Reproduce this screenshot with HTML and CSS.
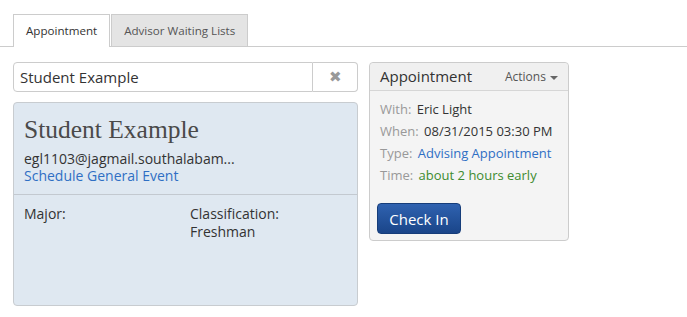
FILE: index.html
```html
<!DOCTYPE html>
<html lang="en">
<head>
  <meta charset="UTF-8" />
  <title>Appointment</title>
  <link rel="stylesheet" href="styles.css">
</head>
<body>

  <div class="tabs">
    <a href="#" class="tab active">Appointment</a>
    <a href="#" class="tab">Advisor Waiting Lists</a>
  </div>

  <div class="content">
    <div class="left-col">
      <div class="search">
        <input type="text" value="Student Example">
        <button class="btn-clear">&#10006;</button>
      </div>

      <div class="student-card">
        <div class="student-top">
          <h2>Student Example</h2>
          <div class="email">egl1103@jagmail.southalabam...</div>
          <a href="#" class="event-link">Schedule General Event</a>
        </div>
        <div class="student-info">
          <div class="info-col">Major:</div>
          <div class="info-col">Classification:<br>Freshman</div>
        </div>
      </div>
    </div>

    <div class="panel">
      <div class="panel-head">
        <span class="panel-title">Appointment</span>
        <span class="actions">Actions <span class="caret"></span></span>
      </div>
      <div class="panel-body">
        <div class="row"><span class="lbl">With:</span> Eric Light</div>
        <div class="row"><span class="lbl">When:</span> 08/31/2015 03:30 PM</div>
        <div class="row"><span class="lbl">Type:</span> <a href="#">Advising Appointment</a></div>
        <div class="row"><span class="lbl">Time:</span> <span class="early">about 2 hours early</span></div>
        <button class="btn-checkin">Check In</button>
      </div>
    </div>
  </div>

</body>
</html>
```

FILE: styles.css
```css
body {
  margin: 0;
  font-family: "Open Sans", Arial, sans-serif;
  font-size: 13px;
  color: #333;
  background: #fff;
}
a {
  color: #2f6fc4;
  text-decoration: none;
}
.tabs {
  display: flex;
  margin-top: 14px;
  padding-left: 13px;
  border-bottom: 1px solid #ccc;
}
.tab {
  height: 31px;
  line-height: 31px;
  padding: 0 12px;
  font-size: 11.6px;
  color: #555;
  background: #e4e4e4;
  border: 1px solid #ccc;
  border-bottom: none;
  margin-left: 1px;
}
.tab.active {
  background: #fff;
  color: #333;
  margin-left: 0;
  margin-bottom: -1px;
  height: 32px;
}
.content {
  display: flex;
  align-items: flex-start;
  gap: 11px;
  padding: 15px 0 0 13px;
}
.left-col {
  width: 345px;
  display: flex;
  flex-direction: column;
  gap: 10px;
}
.search {
  display: flex;
  height: 30px;
}
.search input {
  flex: 1;
  min-width: 0;
  box-sizing: border-box;
  height: 30px;
  border: 1px solid #ccc;
  border-radius: 4px 0 0 4px;
  padding: 0 6px;
  font-family: inherit;
  font-size: 15px;
  color: #333;
}
.btn-clear {
  width: 45px;
  height: 30px;
  border: 1px solid #ccc;
  border-left: none;
  border-radius: 0 4px 4px 0;
  background: #fff;
  color: #999;
  font-size: 15px;
  padding: 0;
}
.student-card {
  box-sizing: border-box;
  height: 204px;
  background: #dfe8f1;
  border: 1px solid #c8ccd0;
  border-radius: 4px;
}
.student-top {
  padding: 12px 10px 10px;
  border-bottom: 1px solid #c3c9d0;
  line-height: 17px;
  font-size: 14px;
}
.student-top h2 {
  margin: 0 0 5px;
  font-family: "Liberation Serif", "Times New Roman", serif;
  font-weight: normal;
  font-size: 25.5px;
  line-height: 30px;
  color: #4a4a4a;
}
.email {
  color: #333;
}
.event-link {
  display: block;
}
.student-info {
  display: flex;
  padding: 10px 10px;
  font-size: 14px;
  line-height: 18px;
}
.info-col {
  width: 166px;
  flex-shrink: 0;
}
.info-col + .info-col {
  flex: 1;
  width: auto;
}
.panel {
  width: 200px;
  box-sizing: border-box;
  border: 1px solid #ccc;
  border-radius: 4px;
  background: #f4f4f4;
}
.panel-head {
  display: flex;
  justify-content: space-between;
  align-items: center;
  height: 27px;
  padding: 0 10px;
  border-bottom: 1px solid #d6d6d6;
  background: #f0f0f0;
  border-radius: 4px 4px 0 0;
}
.panel-title {
  font-size: 15px;
  color: #333;
  margin-top: -2px;
}
.actions {
  font-size: 12px;
  color: #555;
}
.caret {
  display: inline-block;
  border-left: 4px solid transparent;
  border-right: 4px solid transparent;
  border-top: 4px solid #666;
  vertical-align: middle;
  margin-left: 1px;
}
.panel-body {
  padding: 7px 7px 6px 10px;
}
.row {
  line-height: 22px;
  white-space: nowrap;
}
.lbl {
  color: #999;
  margin-right: 2px;
}
.early {
  color: #3d8b2f;
}
.btn-checkin {
  margin: 17px 0 0 -3px;
  width: 84px;
  height: 31px;
  border: 1px solid #163d7a;
  border-radius: 4px;
  background: linear-gradient(to bottom, #2f62b0, #1a4589);
  color: #fff;
  font-family: inherit;
  font-size: 15px;
  cursor: pointer;
}
```
